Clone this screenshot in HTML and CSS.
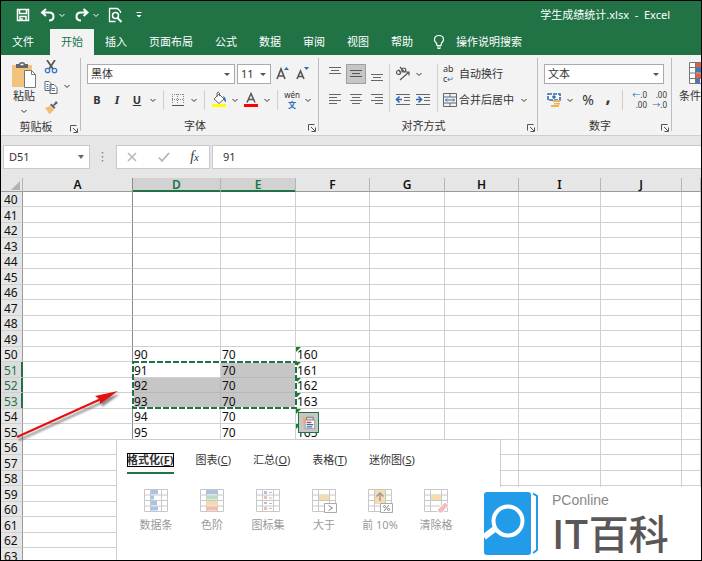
FILE: index.html
```html
<!DOCTYPE html>
<html lang="zh-CN">
<head>
<meta charset="utf-8">
<title>学生成绩统计.xlsx - Excel</title>
<link rel="stylesheet" href="styles.css">
</head>
<body>
<svg class="defs" width="0" height="0" aria-hidden="true">
  <symbol id="chev" viewBox="0 0 12 12"><path d="M3.5 5 6 7.5 8.500 5" fill="none" stroke="currentColor"/></symbol>
  <symbol id="launch" viewBox="0 0 8 8"><path d="M.5 6.500V.5H6.500M3 3l4 4M7.500 3.500v4h-4" fill="none" stroke="#555"/></symbol>
  <symbol id="grid" viewBox="0 0 26 24"><path d="M1.500.5h23v22h-23zM1.500 6h23M1.500 11.500h23M1.500 17h23M7.500.5v22M18.500.5v22" fill="#fff" stroke="#c8c8c8"/></symbol>
</svg>

<header class="top">
  <div class="titlebar">
    <button class="qa" aria-label="保存"><svg viewBox="0 0 16 16"><path d="M2.500 2.500h11v11h-11zM4.500 2.500v4h7v-4M5 13.500v-4h6v4M7 11v2" fill="none" stroke="#fff" stroke-width="1.500"/></svg></button>
    <button class="qa undo" aria-label="撤消"><svg viewBox="0 0 16 16"><path d="M6 2 2 5.500 6 9M2.500 5.500H9q4.500 0 4.500 4T9 13.500" fill="none" stroke="#fff" stroke-width="2"/></svg></button>
    <button class="drop" aria-label="撤消列表"><svg><use href="#chev"/></svg></button>
    <button class="qa redo" aria-label="恢复"><svg viewBox="0 0 16 16"><path d="M9.500 2l4 3.500-4 3.500M13 5.500H7q-4.500 0-4.500 4T7 13.500" fill="none" stroke="#fff" stroke-width="2"/></svg></button>
    <button class="drop" aria-label="恢复列表"><svg><use href="#chev"/></svg></button>
    <button class="qa preview" aria-label="打印预览"><svg viewBox="0 0 16 16"><path d="M13.500 6V4.500l-3-3h-8v13h6" fill="none" stroke="#fff" stroke-width="1.300"/><circle cx="8.500" cy="8.500" r="3" fill="none" stroke="#fff" stroke-width="1.500"/><path d="m10.500 11 4 4" stroke="#fff" stroke-width="2"/></svg></button>
    <button class="drop custom" aria-label="自定义快速访问工具栏"><svg viewBox="0 0 12 12"><path d="M3.500 3.500h5" stroke="#fff"/><path d="M3.500 6h5L6 8.500z" fill="#fff"/></svg></button>
    <span class="doc">学生成绩统计.xlsx &nbsp;- &nbsp;Excel</span>
  </div>
  <nav class="tabs">
    <a href="#" class="file">文件</a><a href="#" class="on">开始</a><a href="#">插入</a><a href="#">页面布局</a><a href="#">公式</a><a href="#">数据</a><a href="#">审阅</a><a href="#">视图</a><a href="#">帮助</a>
    <svg class="bulb" viewBox="0 0 12 16"><path d="M4 11.500Q4 9.500 2.500 8T1.500 5.500Q1.500 1.500 6 1.500T10.500 5.500Q10.500 7 9.300 8T8 11.500zM4 13h4M4.500 14.500h3" fill="none" stroke="#fff" stroke-width="1.200"/></svg>
    <a href="#" class="tell">操作说明搜索</a>
  </nav>
</header>

<section class="ribbon">
  <div class="group clip">
    <div class="main cols">
      <button class="paste"><svg viewBox="0 0 26 28"><path d="M1 4h20v22H1z" fill="#f2c37c"/><path d="M5 7V3h3q0-2 3-2t3 2h3v4z" fill="#666"/><path d="M9.500 3.500h3" stroke="#fff" stroke-width="1.500"/><path d="M13.500 9.500h7l4 4v13h-11z" fill="#fff" stroke="#777"/><path d="M20.500 9.500v4h4" fill="none" stroke="#777"/></svg>粘贴<svg class="cv"><use href="#chev"/></svg></button>
      <div class="side">
        <button aria-label="剪切"><svg viewBox="0 0 14 14"><path d="M3 0l6 9M11 0 5 9" stroke="#555" stroke-width="1.700"/><circle cx="3.500" cy="10.500" r="2.200" fill="none" stroke="#3a78c4" stroke-width="1.300"/><circle cx="10.500" cy="10.500" r="2.200" fill="none" stroke="#3a78c4" stroke-width="1.300"/></svg></button>
        <button aria-label="复制"><svg viewBox="0 0 14 14"><path d="M1 1.500h4l2 2v7H1zM6 4.500h4l3 3v6H6z" fill="#fff" stroke="#666"/><path d="M2.500 4.500h2M2.500 6.500h2M2.500 8.500h2M8 8.500h3M8 10.500h3" stroke="#3a78c4"/></svg></button>
        <button aria-label="格式刷"><svg viewBox="0 0 14 14"><path d="m1 8 5-2 4 4-4 4q-2-1-3-3l1 0q-2-1-3-3z" fill="#f0bd73"/><path d="m6 5 1.500-1.500L9 5l3-4 2 2-4 3 1.500 1.500L10 9z" fill="#666"/></svg></button>
      </div>
      <button class="drop copydrop" aria-label="复制选项"><svg><use href="#chev"/></svg></button>
    </div>
    <div class="name"><span>剪贴板</span><svg><use href="#launch"/></svg></div>
  </div>

  <div class="group font">
    <div class="main">
      <div class="row">
        <label class="sel face"><select aria-label="字体"><option>黑体</option></select></label>
        <label class="sel size"><select aria-label="字号"><option>11</option></select></label>
        <button class="ic" aria-label="增大字号"><svg viewBox="0 0 20 20"><path d="m4 15 4-10 4 10M5.500 12h5" fill="none" stroke="#555" stroke-width="1.600"/><path d="m11 6 2.500-3L16 6z" fill="#2b6cb8"/></svg></button>
        <button class="ic" aria-label="减小字号"><svg viewBox="0 0 20 20"><path d="m4 15 3.500-8 3.500 8M5.500 12.500h4" fill="none" stroke="#555" stroke-width="1.600"/><path d="m11 3 2.500 3L16 3z" fill="#2b6cb8"/></svg></button>
      </div>
      <div class="row">
        <button class="ic b">B</button><button class="ic i">I</button><button class="ic u">U</button>
        <button class="drop" aria-label="下划线选项"><svg><use href="#chev"/></svg></button><i class="sep"></i>
        <button class="ic" aria-label="边框"><svg viewBox="0 0 20 20"><path d="M4.500 4v10M9.500 4v10M15.500 4v10M4 4.500h12M4 9.500h12" stroke="#888" stroke-dasharray="1 1"/><path d="M4 15.500h12" stroke="#555"/></svg></button>
        <button class="drop" aria-label="边框选项"><svg><use href="#chev"/></svg></button><i class="sep"></i>
        <button class="ic" aria-label="填充颜色"><svg viewBox="0 0 20 20"><path d="m5 9 5-5 5 5-5 4.500zM8 7V3q1-2 2.500 0v3" fill="#fff" stroke="#666"/><path d="M14 6q3 1 3 6-2 0-2-3z" fill="#2b6cb8"/><path d="M3 14h14v3H3z" fill="#ff0"/></svg></button>
        <button class="drop" aria-label="填充选项"><svg><use href="#chev"/></svg></button>
        <button class="ic" aria-label="字体颜色"><svg viewBox="0 0 20 20"><path d="m6 12.500 4-9 4 9M7.500 9.500h5" fill="none" stroke="#555" stroke-width="1.500"/><path d="M3 14h14v3H3z" fill="#f00"/></svg></button>
        <button class="drop" aria-label="颜色选项"><svg><use href="#chev"/></svg></button><i class="sep"></i>
        <button class="ic wen"><span>wén</span><b>文</b></button>
        <button class="drop" aria-label="拼音选项"><svg><use href="#chev"/></svg></button>
      </div>
    </div>
    <div class="name"><span>字体</span><svg><use href="#launch"/></svg></div>
  </div>

  <div class="group align">
    <div class="main cols">
      <div class="six">
        <button class="ic" aria-label="顶端对齐"><svg viewBox="0 0 20 20"><path d="M4 3.500h12M6 6.500h8M4 9.500h12" stroke="#666"/></svg></button>
        <button class="ic pressed" aria-label="垂直居中"><svg viewBox="0 0 20 20"><path d="M4 6.500h12M6 9.500h8M4 12.500h12" stroke="#555"/></svg></button>
        <button class="ic" aria-label="底端对齐"><svg viewBox="0 0 20 20"><path d="M4 10.500h12M6 13.500h8M4 16.500h12" stroke="#666"/></svg></button>
        <button class="ic" aria-label="左对齐"><svg viewBox="0 0 20 20"><path d="M4 6.500h12M4 9.500h8M4 12.500h12M4 15.500h8" stroke="#666"/></svg></button>
        <button class="ic" aria-label="居中"><svg viewBox="0 0 20 20"><path d="M4 6.500h12M6 9.500h8M4 12.500h12M6 15.500h8" stroke="#666"/></svg></button>
        <button class="ic" aria-label="右对齐"><svg viewBox="0 0 20 20"><path d="M4 6.500h12M8 9.500h8M4 12.500h12M8 15.500h8" stroke="#666"/></svg></button>
      </div>
      <div class="part indent">
        <div class="row"><button class="ic" aria-label="方向"><svg viewBox="0 0 20 20"><g fill="none" stroke="#555" stroke-width="1.200"><circle cx="5.500" cy="8.500" r="2"/><path d="M5.500 5.500 8 9.500M7 3l4.500 5"/><circle cx="10.800" cy="6" r="2"/><path d="m7 16 9-8M12.500 8H16v3.500"/></g></svg></button><button class="drop" aria-label="方向选项"><svg><use href="#chev"/></svg></button></div>
        <div class="row"><button class="ic" aria-label="减少缩进"><svg viewBox="0 0 20 20"><path d="M3 4.500h14M11 7.500h6M11 10.500h6M3 14.500h14" stroke="#666"/><path d="M9 9.500H4M6.500 6.500l-3 3 3 3" fill="none" stroke="#2b6cb8" stroke-width="1.600"/></svg></button><button class="ic" aria-label="增加缩进"><svg viewBox="0 0 20 20"><path d="M3 4.500h14M11 7.500h6M11 10.500h6M3 14.500h14" stroke="#666"/><path d="M3 9.500h5M5.500 6.500l3 3-3 3" fill="none" stroke="#2b6cb8" stroke-width="1.600"/></svg></button></div>
      </div>
      <div class="part wrap">
        <div class="row"><button class="txt"><span class="ab"><span>ab</span><span>c<em>↵</em></span></span>自动换行</button></div>
        <div class="row"><button class="txt"><svg viewBox="0 0 14 14"><path d="M.5.5h13v13H.5zM.5 4h13M.5 10h13M7 .5V4M7 10v3.500" fill="none" stroke="#666"/><path d="M2.500 7h9M4 5.500 2.500 7 4 8.500M10 5.500 11.500 7 10 8.500" fill="none" stroke="#2b6cb8"/></svg>合并后居中</button><button class="drop" aria-label="合并选项"><svg><use href="#chev"/></svg></button></div>
      </div>
    </div>
    <div class="name"><span>对齐方式</span><svg><use href="#launch"/></svg></div>
  </div>

  <div class="group number">
    <div class="main">
      <div class="row"><label class="sel fmt"><select aria-label="数字格式"><option>文本</option></select></label></div>
      <div class="row">
        <button class="ic" aria-label="会计数字格式"><svg viewBox="0 0 20 20"><path d="M4 4h12v6H4z" fill="#fff" stroke="#2b6cb8" stroke-width="1.600" stroke-dasharray="4 1"/><circle cx="10" cy="7" r="1.800" fill="#2b6cb8"/><path d="M9 10h7v2H9zM10 13h6v1.500h-6zM7 15h8v2H7z" fill="#eeb05b"/></svg></button>
        <button class="drop" aria-label="货币选项"><svg><use href="#chev"/></svg></button>
        <button class="ic pct">%</button><button class="ic comma">,</button><i class="sep"></i>
        <button class="ic dec"><span><em>←</em>.0</span><span>.00</span></button>
        <button class="ic dec"><span>.00</span><span><em>→</em>.0</span></button>
      </div>
    </div>
    <div class="name"><span>数字</span><svg><use href="#launch"/></svg></div>
  </div>

  <div class="group styles">
    <button class="cond"><svg viewBox="0 0 24 22"><path d="M.5.5h23v21H.5zM.5 5.500h23M.5 11h23M.5 16.500h23M6.500.5v21" fill="#fff" stroke="#777"/><path d="M7 1h14v4H7zM7 11.500h7v4.500H7z" fill="#e2603c"/><path d="M7 6h17v4.500H7zM7 17h4v4H7z" fill="#3f78bd"/></svg>条件格式</button>
  </div>
</section>

<section class="formula">
  <div class="namebox"><input aria-label="名称框" value="D51"><button aria-label="名称列表"></button></div>
  <svg class="dots" viewBox="0 0 3 12"><path d="M1.500 1v11" stroke="#888" stroke-width="1.500" stroke-dasharray="1.500 2.500"/></svg>
  <div class="tools">
    <button aria-label="取消"><svg viewBox="0 0 12 12"><path d="m2 2 8 8M10 2l-8 8" stroke="#b5b5b5" stroke-width="1.500"/></svg></button>
    <button aria-label="输入"><svg viewBox="0 0 12 12"><path d="m1 6.500 3 3.500 7-8" fill="none" stroke="#b5b5b5" stroke-width="1.800"/></svg></button>
    <button class="fx" aria-label="插入函数">f<small>x</small></button>
  </div>
  <input class="bar" aria-label="编辑栏" value="91">
</section>

<main class="sheet">
  <table>
    <colgroup><col class="c0"><col class="ca"><col class="cd"><col class="ce"><col class="cf"><col class="cg"><col class="ch"><col class="ci"><col class="cj"><col></colgroup>
    <thead><tr><th class="corner"><svg viewBox="0 0 9 9"><path d="M9 0v9H0z" fill="#b2b2b2"/></svg></th><th>A</th><th class="hot">D</th><th class="hot">E</th><th>F</th><th>G</th><th>H</th><th>I</th><th>J</th><th></th></tr></thead>
    <tbody>
      <tr><th>40<td><td><td><td><td><td><td><td><td>
      <tr><th>41<td><td><td><td><td><td><td><td><td>
      <tr><th>42<td><td><td><td><td><td><td><td><td>
      <tr><th>43<td><td><td><td><td><td><td><td><td>
      <tr><th>44<td><td><td><td><td><td><td><td><td>
      <tr><th>45<td><td><td><td><td><td><td><td><td>
      <tr><th>46<td><td><td><td><td><td><td><td><td>
      <tr><th>47<td><td><td><td><td><td><td><td><td>
      <tr><th>48<td><td><td><td><td><td><td><td><td>
      <tr><th>49<td><td><td><td><td><td><td><td><td>
      <tr><th>50<td><td>90<td>70<td class="flag">160<td><td><td><td><td>
      <tr><th class="hot">51<td><td class="anchor">91<svg class="ants" viewBox="0 0 165 48"><rect x="1" y="1" width="163" height="46" fill="none" stroke="#fff" stroke-width="2"/><rect x="1" y="1" width="163" height="46" fill="none" stroke="#217346" stroke-width="2" stroke-dasharray="6 2"/></svg><td class="pick">70<td class="flag">161<td><td><td><td><td>
      <tr><th class="hot">52<td><td class="pick">92<td class="pick">70<td class="flag">162<td><td><td><td><td>
      <tr><th class="hot">53<td><td class="pick">93<td class="pick">70<td class="flag">163<td><td><td><td><td>
      <tr><th>54<td><td>94<td>70<td class="flag"><button class="quick" aria-label="快速分析"><svg viewBox="0 0 20 20"><path d="M4 4h4v4H6v5H4z" fill="#e8b878"/><path d="M8 4.500h7v3H8z" fill="#ddd" stroke="#777"/><path d="M6.500 7.500h10v9h-10z" fill="#fff" stroke="#999"/><path d="M8 10h5" stroke="#d33" stroke-width="1.500"/><path d="M8 12.200h7M8 14.500h6" stroke="#2b6cb8" stroke-width="1.300"/></svg></button><td><td><td><td><td>
      <tr><th>55<td><td>95<td>70<td class="flag">165<td><td><td><td><td>
      <tr><th>56<td><td><td><td><td><td><td><td><td>
      <tr><th>57<td><td><td><td><td><td><td><td><td>
      <tr><th>58<td><td><td><td><td><td><td><td><td>
      <tr><th>59<td><td><td><td><td><td><td><td><td>
      <tr><th>60<td><td><td><td><td><td><td><td><td>
      <tr><th>61<td><td><td><td><td><td><td><td><td>
      <tr><th>62<td><td><td><td><td><td><td><td><td>
      <tr><th>63<td><td><td><td><td><td><td><td><td>
    </tbody>
  </table>

  <svg class="arrow" viewBox="0 0 110 56"><g class="shade"><path d="M2 49 86 11" stroke="#e60f0f" stroke-width="2"/><path d="M103 3 80 8l5 3.500L85 16z" fill="#e60f0f"/></g></svg>

  <aside class="pop">
    <div class="poptabs">
      <button class="on"><span>格式化(<u>F</u>)</span></button><button>图表(<u>C</u>)</button><button>汇总(<u>O</u>)</button><button>表格(<u>T</u>)</button><button>迷你图(<u>S</u>)</button>
    </div>
    <div class="popitems">
      <button><svg viewBox="0 0 26 24"><use href="#grid" width="26" height="24"/><path d="M8 1h7v4H8zM8 6.500h3v4H8zM8 12h6v4H8zM8 17.500h7v4H8z" fill="#a9c4e2"/></svg><span>数据条</span></button>
      <button><svg viewBox="0 0 26 24"><use href="#grid" width="26" height="24"/><path d="M7 1h12v4H7z" fill="#a9c4e2"/><path d="M7 6.500h12v4H7z" fill="#b9dcc8"/><path d="M7 12h12v4H7z" fill="#f8d9a8"/><path d="M7 17.500h12v4H7z" fill="#f3bdae"/></svg><span>色阶</span></button>
      <button><svg viewBox="0 0 26 24"><use href="#grid" width="26" height="24"/><path d="M9 2h3v3H9zM9 13h3v2H9z" fill="#a9c4e2"/><path d="M9 7h3v3H9zM9 18h3v3H9z" fill="#f3bdae"/><path d="M14 3.500h3M14 9h3M14 14.500h3M14 19.500h3" stroke="#bbb"/></svg><span>图标集</span></button>
      <button><svg viewBox="0 0 26 24"><use href="#grid" width="26" height="24"/><path d="M8 6h10v5H8z" fill="#f6dcae"/><path d="M13.500 14.500h12v9h-12z" fill="#fff" stroke="#aaa"/><path d="m17.500 16.500 4 2.500-4 2.500" fill="none" stroke="#888"/></svg><span>大于</span></button>
      <button><svg viewBox="0 0 26 24"><use href="#grid" width="26" height="24"/><path d="M8 1h10v14H8z" fill="#f6dcae"/><path d="M13 12V4M9.500 7.500 13 4l3.500 3.500" fill="none" stroke="#999" stroke-width="1.500"/><path d="M13.500 14.500h12v9h-12z" fill="#fff" stroke="#aaa"/><path d="m17 22 5-6" stroke="#888"/><circle cx="17.500" cy="17.500" r="1" fill="none" stroke="#888"/><circle cx="21.500" cy="20.500" r="1" fill="none" stroke="#888"/></svg><span>前 10%</span></button>
      <button><svg viewBox="0 0 26 24"><use href="#grid" width="26" height="24"/><path d="M8 6h10v5H8z" fill="#f6dcae"/><path d="m14 21 8-8 4 3-7 8h-3z" fill="#f4bcc3" stroke="#fff"/></svg><span class="cut">清除格式</span></button>
    </div>
  </aside>

  <div class="mark">
    <svg viewBox="0 0 56 64"><path d="M3 0h41q3 0 3 3v57q0 3-3 3H3q-3 0-3-3V3Q0 0 3 0z" fill="#229be8"/><path d="M49 1.500 53 4v54L49 61" fill="none" stroke="#229be8" stroke-width="2"/><circle cx="24" cy="29" r="14.500" fill="none" stroke="#fff" stroke-width="4"/><path d="M0 45l12-9" stroke="#fff" stroke-width="6"/></svg>
    <div class="words"><span class="pc">PConline</span><span class="it">IT百科</span></div>
  </div>
</main>
</body>
</html>
```
FILE: styles.css
```css
* { box-sizing: border-box; }
body {
  margin: 0;
  height: 100vh;
  display: flex;
  flex-direction: column;
  border: 1px solid #000;
  background: #fff;
  overflow: hidden;
  font: 11px/16px "Noto Sans", "Noto Sans CJK SC", sans-serif;
  color: #333;
}
.defs { position: absolute; }
button, input, select { font: inherit; color: inherit; margin: 0; padding: 0; border: 0; background: none; }
button { display: flex; align-items: center; justify-content: center; flex: none; }
a { color: inherit; text-decoration: none; }
svg { display: block; flex: none; }

/* title and tabs */
.top { background: #217346; color: #fff; flex: none; }
.titlebar { display: flex; align-items: center; height: 28px; padding: 0 31px 0 14px; }
.qa svg { width: 16px; height: 16px; }
.undo { margin-left: 9px; }
.redo { margin-left: 6px; }
.preview { margin-left: 5px; }
.custom { margin-left: 10px; }
.drop, .drop svg { width: 12px; height: 12px; }
.doc { margin-left: auto; }
.tabs { display: flex; align-items: center; height: 26px; }
.tabs a { padding: 0 11px; line-height: 26px; }
.tabs .file { margin-right: 5px; }
.tabs .on { background: #f3f3f3; color: #217346; }
.tabs .bulb { width: 12px; height: 16px; margin-left: 9px; }

/* ribbon */
.ribbon { display: flex; flex: none; height: 81px; background: #f3f3f3; border-bottom: 1px solid #cfcfcf; overflow: hidden; }
.group { position: relative; display: flex; flex-direction: column; flex: none; padding: 9px 0 0 6px; }
.group::after { content: ""; position: absolute; right: 0; top: 3px; bottom: 4px; width: 1px; background: #bdbdbd; }
.clip { width: 80px; }
.font { width: 238px; }
.align { width: 219px; }
.number { width: 134px; }
.styles { padding: 7px 0 0 6px; }
.styles::after { display: none; }
.main { height: 50px; display: flex; flex-direction: column; }
.main.cols { flex-direction: row; }
.row { display: flex; align-items: center; height: 20px; }
.row + .row { height: 24px; margin-top: 4px; }
.name { display: flex; align-items: center; height: 18px; margin-top: 4px; padding-right: 3px; margin-left: -6px; }
.name span { flex: 1; text-align: center; padding-left: 1px; }
.name svg { width: 8px; height: 8px; margin-top: 4px; }
.ic { width: 20px; height: 20px; }
.ic svg { width: 20px; height: 20px; }
.sep { width: 1px; height: 20px; margin: 0 4px; background: #cfcfcf; }
.paste { flex-direction: column; justify-content: flex-start; width: 34px; margin-top: -3px; line-height: 14px; }
.paste svg { width: 26px; height: 28px; }
.paste .cv { width: 12px; height: 12px; margin-top: 2px; }
.side { display: flex; flex-direction: column; gap: 6px; margin: -4px 0 0 3px; }
.side svg { width: 14px; height: 14px; }
.copydrop { margin: 16px 0 0 3px; }
.sel { position: relative; display: flex; height: 20px; border: 1px solid #ababab; background: #fff; }
.sel::after { content: ""; position: absolute; right: 4px; top: 8px; border: 3px solid transparent; border-top-color: #555; border-bottom: 0; }
.sel select { width: 100%; padding-left: 3px; appearance: none; }
.face { width: 148px; margin-right: 2px; }
.size { width: 34px; margin-right: 2px; }
.fmt { width: 120px; }
.b { font-weight: 700; }
.i { font-style: italic; font-family: "Liberation Serif", serif; font-size: 13px; font-weight: 700; }
.u { text-decoration: underline; font-weight: 700; }
.wen { flex-direction: column; font-size: 8px; line-height: 10px; }
.wen b { color: #2b6cb8; }
.six { display: grid; grid-template-columns: repeat(3, 20px); gap: 4px 1px; align-content: start; }
.pressed { background: #c6c6c6; border: 1px solid #a0a0a0; }
.part { border-left: 1px solid #cfcfcf; height: 48px; }
.indent { margin-left: 2px; padding-left: 3px; width: 48px; }
.wrap { padding-left: 5px; }
.txt { gap: 2px; }
.txt svg { width: 14px; height: 14px; }
.wrap .drop { margin-left: 4px; }
.ab { display: flex; flex-direction: column; width: 14px; font-size: 9px; line-height: 10px; text-align: left; }
.ab em, .dec em { font-style: normal; color: #2b6cb8; }
.ab em { font-size: 8px; }
.pct { font-size: 14px; margin-left: 2px; }
.comma { font-size: 18px; font-weight: 700; line-height: 8px; padding-bottom: 8px; }
.dec { flex-direction: column; font-size: 8px; line-height: 10px; align-items: flex-end; }
.dec span { display: flex; }
.cond { flex-direction: column; width: 46px; line-height: 14px; gap: 5px; }
.cond svg { width: 24px; height: 22px; }

/* formula bar */
.formula { display: flex; flex: none; align-items: center; height: 42px; padding: 0 0 1px 2px; background: #e6e6e6; }
.namebox, .tools, .bar { height: 24px; background: #fff; border: 1px solid #cacaca; }
.namebox { display: flex; width: 87px; padding-left: 5px; }
.namebox input { flex: 1; min-width: 0; }
.namebox button { width: 16px; }
.namebox button::before { content: ""; border: 3px solid transparent; border-top: 4px solid #666; border-bottom: 0; }
.dots { width: 3px; height: 12px; margin: 0 12px 0 11px; }
.tools { display: flex; align-items: center; justify-content: space-between; width: 94px; padding: 0 10px 0 9px; }
.tools svg { width: 12px; height: 12px; }
.fx { font: italic 14px/16px "Liberation Serif", serif; }
.fx small { font-size: 11px; }
.bar { flex: 1; min-width: 0; margin-left: 2px; padding-left: 10px; border-right: 0; }

/* sheet */
.sheet { position: relative; flex: 1; min-height: 0; overflow: hidden; }
table { width: 100%; table-layout: fixed; border-spacing: 0; font-size: 12px; line-height: 12px; color: #111; }
.c0 { width: 22px; } .ca { width: 110px; } .cd { width: 88px; } .ce { width: 75px; } .cf { width: 74px; }
.cg { width: 75px; } .ch { width: 74px; } .ci { width: 82px; } .cj { width: 81px; }
th, td { padding: 2px 0 0; border: 0 solid #d0d0d0; border-width: 0 1px 1px 0; font-weight: 400; text-align: left; vertical-align: bottom; white-space: nowrap; }
tbody tr { height: 15px; }
tbody tr:nth-child(even) { height: 16px; }
td { padding-left: 1px; }
thead th { height: 14px; padding-top: 1px; text-align: center; font-weight: 600; background: #e6e6e6; border-bottom-color: #9a9a9a; border-right-color: #b5b5b5; }
thead .hot { background: #d2d2d2; color: #217346; border-bottom-color: #217346; box-shadow: inset 0 -1px #217346; }
.corner svg { width: 9px; height: 9px; margin: 0 0 1px 10px; }
tbody th { padding-left: 3px; background: #e6e6e6; border-right-color: #9a9a9a; }
tbody .hot { background: #dcdcdc; color: #217346; border-right-color: #217346; box-shadow: inset -1px 0 #217346; }
td:nth-child(2), thead th:nth-child(2) { border-right-color: #8c8c8c; }
.pick { background: #c6c6c6; border-color: #b8b8b8; }
.flag { position: relative; }
.flag::before { content: ""; position: absolute; left: 0; top: 0; border: 0 solid transparent; border-top-color: #13851d; border-width: 5px 5px 0 0; }
.anchor { position: relative; }
.ants { position: absolute; left: -1px; top: -1px; width: 165px; height: 48px; z-index: 1; }
.quick { position: absolute; left: 2px; top: 3px; width: 21px; height: 21px; background: #c6c6c6; border: 1px solid #217346; z-index: 2; }
.quick svg { width: 19px; height: 19px; }
.arrow { position: absolute; left: 14px; top: 210px; width: 110px; height: 56px; }
.shade { filter: drop-shadow(2px 3px 1px rgba(0, 0, 0, .45)); }

/* quick analysis panel */
.pop { position: absolute; left: 115px; top: 261px; bottom: 0; width: 385px; background: #fff; border: 1px solid #cdcdcd; border-bottom: 0; z-index: 1; }
.poptabs { display: flex; gap: 22px; padding: 12px 0 0 10px; }
.poptabs button { height: 22px; padding-bottom: 6px; }
.poptabs .on { border-bottom: 2px solid #217346; padding-bottom: 4px; }
.poptabs .on span { outline: 1px solid #000; outline-offset: -1px; line-height: 14px; font-weight: 700; }
.popitems { display: flex; padding: 15px 0 0 11px; color: #999; }
.popitems button { flex-direction: column; width: 56px; gap: 4px; }
.popitems svg { width: 26px; height: 24px; }
.cut { width: 33px; overflow: hidden; white-space: nowrap; }

/* site mark */
.mark { position: absolute; right: 0; bottom: 0; width: 217px; height: 73px; display: flex; gap: 12px; padding-top: 5px; background: #fff; z-index: 2; }
.mark svg { width: 56px; height: 64px; }
.words { display: flex; flex-direction: column; color: #595757; white-space: nowrap; }
.pc { font: 14px/16px "Liberation Sans", sans-serif; color: #888; }
.it { font: 500 40px/48px "Noto Sans CJK SC", sans-serif; }
```
